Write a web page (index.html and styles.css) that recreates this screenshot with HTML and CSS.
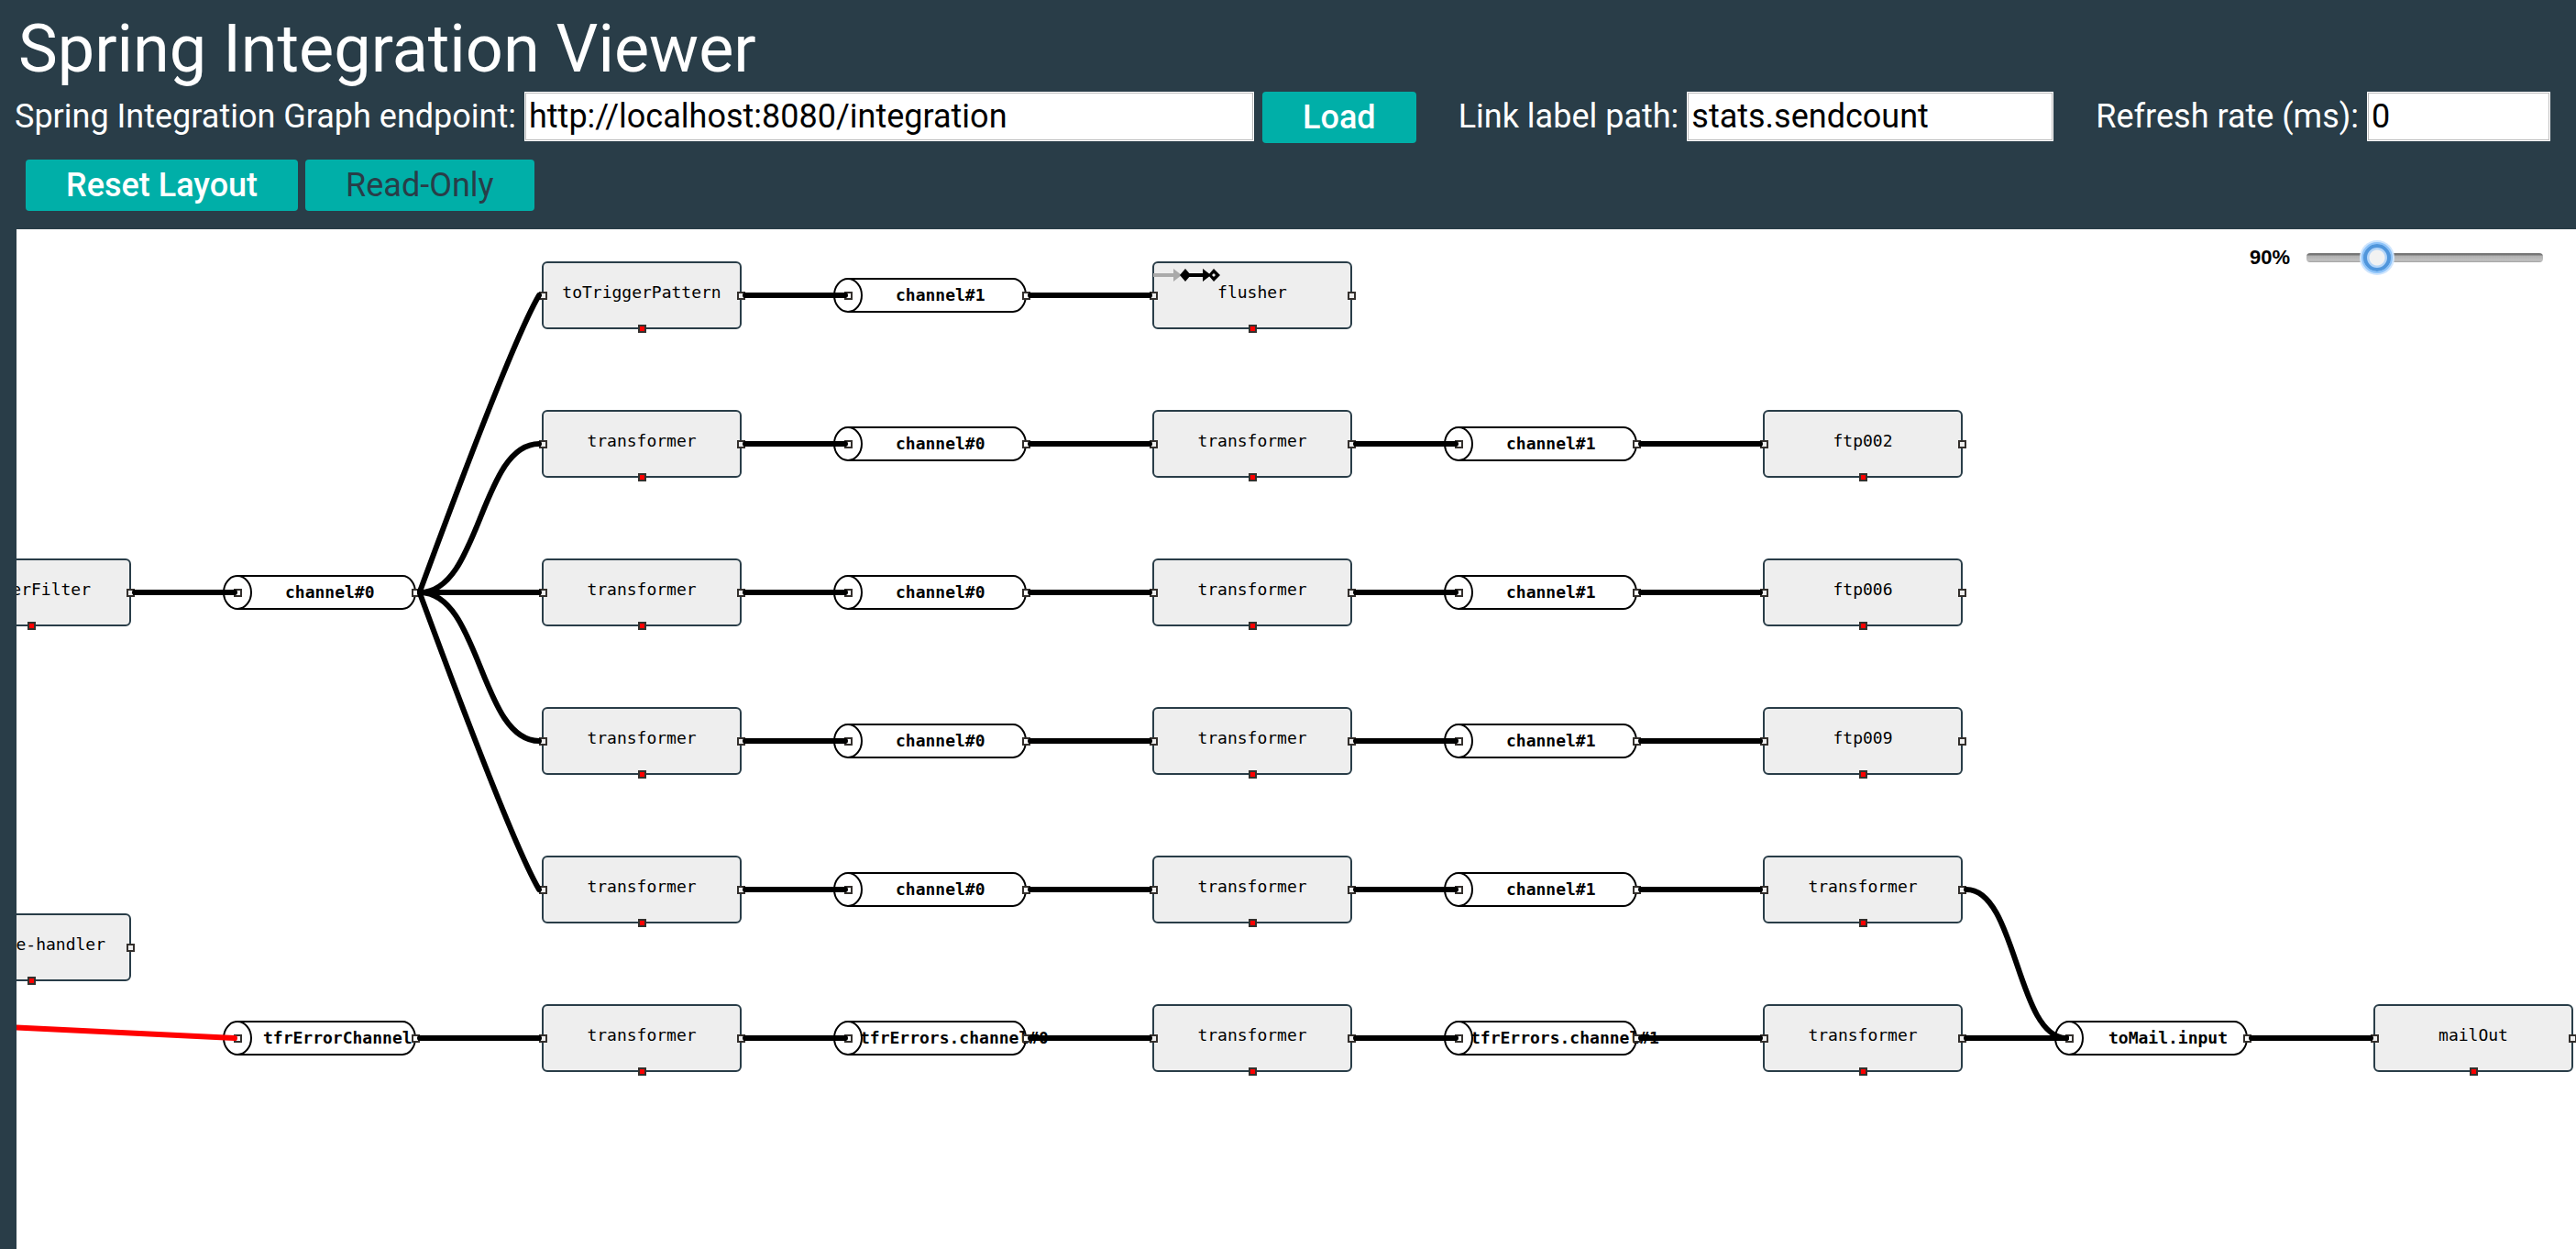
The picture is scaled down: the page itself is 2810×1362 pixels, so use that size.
FILE: index.html
```html
<!DOCTYPE html>
<html lang="en">
<head>
<meta charset="utf-8">
<title>Spring Integration Viewer</title>
<link rel="stylesheet" href="styles.css">
</head>
<body>
<header class="header">
  <h1 class="title">Spring Integration Viewer</h1>
  <form class="controls">
    <div class="field field-wide">
      <label for="endpoint">Spring Integration Graph endpoint:</label>
      <input class="text-input" id="endpoint" type="text" value="http://localhost:8080/integration">
      <button class="button" type="button">Load</button>
    </div>
    <div class="field">
      <label for="link-label">Link label path:</label>
      <input class="text-input input-medium" id="link-label" type="text" value="stats.sendcount">
    </div>
    <div class="field">
      <label for="refresh-rate">Refresh rate (ms):</label>
      <input class="text-input input-short" id="refresh-rate" type="text" value="0">
    </div>
  </form>
  <div class="actions">
    <button class="button" type="button">Reset Layout</button>
    <button class="button button-off" type="button">Read-Only</button>
  </div>
</header>
<main class="canvas">
  <svg class="graph" role="img" aria-label="Integration graph">
    <defs>
      <rect id="port" x="-3" y="-3" width="7" height="7"/>
      <rect id="box" x="-108" y="-36" width="216" height="72" rx="5"/>
      <g id="box-ports">
        <use href="#port" x="-108" class="port"/>
        <use href="#port" x="108" class="port"/>
        <use href="#port" y="36" class="port port-error"/>
      </g>
      <g id="channel">
        <path d="M0 -18H180A14 18 0 0 1 180 18H0"/>
        <ellipse rx="15" ry="18"/>
      </g>
      <g id="channel-ports">
        <use href="#port" class="port port-channel"/>
        <use href="#port" x="194" class="port port-channel"/>
      </g>
    </defs>

    <g class="boxes">
      <use href="#box" x="16" y="396"/>
      <use href="#box" x="16" y="783"/>
      <use href="#box" x="682" y="72"/>
      <use href="#box" x="682" y="234"/>
      <use href="#box" x="682" y="396"/>
      <use href="#box" x="682" y="558"/>
      <use href="#box" x="682" y="720"/>
      <use href="#box" x="682" y="882"/>
      <use href="#box" x="1348" y="72"/>
      <use href="#box" x="1348" y="234"/>
      <use href="#box" x="1348" y="396"/>
      <use href="#box" x="1348" y="558"/>
      <use href="#box" x="1348" y="720"/>
      <use href="#box" x="1348" y="882"/>
      <use href="#box" x="2014" y="234"/>
      <use href="#box" x="2014" y="396"/>
      <use href="#box" x="2014" y="558"/>
      <use href="#box" x="2014" y="720"/>
      <use href="#box" x="2014" y="882"/>
      <use href="#box" x="2680" y="882"/>
    </g>

    <g class="channels">
      <use href="#channel" x="241" y="396"/>
      <use href="#channel" x="241" y="882"/>
      <use href="#channel" x="907" y="72"/>
      <use href="#channel" x="907" y="234"/>
      <use href="#channel" x="907" y="396"/>
      <use href="#channel" x="907" y="558"/>
      <use href="#channel" x="907" y="720"/>
      <use href="#channel" x="907" y="882"/>
      <use href="#channel" x="1573" y="234"/>
      <use href="#channel" x="1573" y="396"/>
      <use href="#channel" x="1573" y="558"/>
      <use href="#channel" x="1573" y="720"/>
      <use href="#channel" x="1573" y="882"/>
      <use href="#channel" x="2239" y="882"/>
    </g>

    <!-- aggregator icon -->
    <g class="icon">
      <path class="icon-muted" d="M1240 48H1262V43L1271 50L1262 57V52H1240Z"/>
      <path d="M1275 43L1281 50L1275 57L1269 50ZM1278 48H1294V43L1303 50L1294 57V52H1278Z"/>
      <path fill-rule="evenodd" d="M1306 43L1313 50L1306 57L1300 50ZM1306 48L1304 50L1306 52L1308 50Z"/>
    </g>

    <g class="box-labels">
      <text class="label-end" x="81" y="399">erFilter</text>
      <text class="label-end" x="97" y="786">e-handler</text>
      <text x="682" y="75">toTriggerPattern</text>
      <text x="682" y="237">transformer</text>
      <text x="682" y="399">transformer</text>
      <text x="682" y="561">transformer</text>
      <text x="682" y="723">transformer</text>
      <text x="682" y="885">transformer</text>
      <text x="1348" y="75">flusher</text>
      <text x="1348" y="237">transformer</text>
      <text x="1348" y="399">transformer</text>
      <text x="1348" y="561">transformer</text>
      <text x="1348" y="723">transformer</text>
      <text x="1348" y="885">transformer</text>
      <text x="2014" y="237">ftp002</text>
      <text x="2014" y="399">ftp006</text>
      <text x="2014" y="561">ftp009</text>
      <text x="2014" y="723">transformer</text>
      <text x="2014" y="885">transformer</text>
      <text x="2680" y="885">mailOut</text>
    </g>

    <g class="channel-labels">
      <text x="293" y="402">channel#0</text>
      <text x="269" y="888">tfrErrorChannel</text>
      <text x="959" y="78">channel#1</text>
      <text x="959" y="240">channel#0</text>
      <text x="959" y="402">channel#0</text>
      <text x="959" y="564">channel#0</text>
      <text x="959" y="726">channel#0</text>
      <text x="920" y="888">tfrErrors.channel#0</text>
      <text x="1625" y="240">channel#1</text>
      <text x="1625" y="402">channel#1</text>
      <text x="1625" y="564">channel#1</text>
      <text x="1625" y="726">channel#1</text>
      <text x="1586" y="888">tfrErrors.channel#1</text>
      <text x="2282" y="888">toMail.input</text>
    </g>

    <g class="ports">
      <use href="#box-ports" x="16" y="396"/>
      <use href="#box-ports" x="16" y="783"/>
      <use href="#box-ports" x="682" y="72"/>
      <use href="#box-ports" x="682" y="234"/>
      <use href="#box-ports" x="682" y="396"/>
      <use href="#box-ports" x="682" y="558"/>
      <use href="#box-ports" x="682" y="720"/>
      <use href="#box-ports" x="682" y="882"/>
      <use href="#box-ports" x="1348" y="72"/>
      <use href="#box-ports" x="1348" y="234"/>
      <use href="#box-ports" x="1348" y="396"/>
      <use href="#box-ports" x="1348" y="558"/>
      <use href="#box-ports" x="1348" y="720"/>
      <use href="#box-ports" x="1348" y="882"/>
      <use href="#box-ports" x="2014" y="234"/>
      <use href="#box-ports" x="2014" y="396"/>
      <use href="#box-ports" x="2014" y="558"/>
      <use href="#box-ports" x="2014" y="720"/>
      <use href="#box-ports" x="2014" y="882"/>
      <use href="#box-ports" x="2680" y="882"/>
      <use href="#channel-ports" x="241" y="396"/>
      <use href="#channel-ports" x="241" y="882"/>
      <use href="#channel-ports" x="907" y="72"/>
      <use href="#channel-ports" x="907" y="234"/>
      <use href="#channel-ports" x="907" y="396"/>
      <use href="#channel-ports" x="907" y="558"/>
      <use href="#channel-ports" x="907" y="720"/>
      <use href="#channel-ports" x="907" y="882"/>
      <use href="#channel-ports" x="1573" y="234"/>
      <use href="#channel-ports" x="1573" y="396"/>
      <use href="#channel-ports" x="1573" y="558"/>
      <use href="#channel-ports" x="1573" y="720"/>
      <use href="#channel-ports" x="1573" y="882"/>
      <use href="#channel-ports" x="2239" y="882"/>
    </g>

    <g class="links">
      <!-- fan-out from the first channel -->
      <path d="M129 396H238"/>
      <path d="M440 395C482 281 544 116 570 72"/>
      <path d="M440 396C506 396 506 234 570 234"/>
      <path d="M440 396H570"/>
      <path d="M440 396C506 396 506 558 570 558"/>
      <path d="M440 397C482 511 544 676 570 720"/>
      <path d="M440 882H570"/>
      <!-- node to channel -->
      <path d="M795 72H904M795 234H904M795 396H904M795 558H904M795 720H904M795 882H904"/>
      <path d="M1461 234H1570M1461 396H1570M1461 558H1570M1461 720H1570M1461 882H1570"/>
      <path d="M2127 882H2236"/>
      <path d="M2127 720C2182 720 2182 882 2236 882"/>
      <!-- channel to node -->
      <path d="M1106 72H1236M1106 234H1236M1106 396H1236M1106 558H1236M1106 720H1236M1106 882H1236"/>
      <path d="M1772 234H1902M1772 396H1902M1772 558H1902M1772 720H1902M1772 882H1902"/>
      <path d="M2438 882H2568"/>
      <path class="link-error" d="M-10 870L238 882"/>
    </g>
  </svg>
  <div class="zoom">
    <label for="zoom">90%</label>
    <input class="zoom-slider" id="zoom" type="range" min="0" max="100" value="27">
  </div>
</main>
</body>
</html>
```
FILE: styles.css
```css
* {
  box-sizing: border-box;
}

html,
body {
  height: 100%;
}

body {
  display: flex;
  flex-direction: column;
  margin: 0;
  overflow: hidden;
  background: #293d48;
  color: #fff;
  font: 36px/42px Roboto, sans-serif;
}

.header {
  padding: 12px 28px 20px 16px;
}

.title {
  margin: 0 0 4px;
  padding-left: 4px;
  font-size: 72px;
  line-height: 84px;
  font-weight: 400;
}

.controls {
  display: flex;
  align-items: flex-start;
  gap: 46px;
}

.field {
  display: flex;
  align-items: flex-start;
  gap: 9px;
  white-space: nowrap;
}

.field label {
  padding-top: 6px;
}

.field-wide,
.field-wide .text-input {
  flex: 1;
  min-width: 0;
}

.text-input {
  height: 54px;
  padding: 0 4px;
  border: 1px solid #fff;
  box-shadow: inset 0 0 0 1px #bbb;
  background: #fff;
  color: #000;
  font: inherit;
}

.input-medium {
  width: 400px;
}

.input-short {
  width: 200px;
}

.button {
  height: 56px;
  padding: 0 44px;
  border: 0;
  border-radius: 4px;
  background: #00afa8;
  color: #fff;
  font: inherit;
  font-weight: 500;
}

.button-off {
  color: #293d48;
  font-weight: 400;
}

.actions {
  display: flex;
  gap: 8px;
  padding: 18px 0 0 12px;
}

.canvas {
  position: relative;
  flex: 1;
  min-height: 0;
  margin-left: 18px;
  background: #fff;
  color: #000;
}

.graph {
  display: block;
  width: 100%;
  height: 100%;
}

.boxes {
  fill: #eee;
  stroke: #293d48;
  stroke-width: 2px;
}

.channels {
  fill: #fff;
  stroke: #000;
  stroke-width: 2px;
}

.box-labels,
.channel-labels {
  font: 18px "DejaVu Sans Mono", monospace;
}

.box-labels {
  text-anchor: middle;
}

.label-end {
  text-anchor: end;
}

.channel-labels {
  font-weight: 700;
}

.port {
  fill: #eee;
  stroke: #34302d;
  stroke-width: 2px;
}

.port-channel {
  fill: #fff;
}

.port-error {
  fill: #f00;
}

.links {
  fill: none;
  stroke: #000;
  stroke-width: 6px;
  stroke-linecap: round;
}

.link-error {
  stroke: #f00;
}

.icon-muted {
  fill: #aaa;
}

.zoom {
  position: absolute;
  top: 12px;
  right: 36px;
  display: flex;
  align-items: center;
  gap: 18px;
  font: bold 22px/38px "Liberation Sans", Arial, sans-serif;
}

.zoom-slider {
  appearance: none;
  width: 258px;
  height: 38px;
  margin: 0;
  background: none;
}

.zoom-slider::-webkit-slider-runnable-track {
  height: 10px;
  border-radius: 4px;
  background: linear-gradient(#777 0 2px, #b0b0b0 3px, #c2c2c2 8px, #a0a0a0);
}

.zoom-slider::-webkit-slider-thumb {
  appearance: none;
  width: 30px;
  height: 30px;
  margin-top: -10px;
  border: 4px solid #5096dc;
  border-radius: 50%;
  background: radial-gradient(#f2f2f2 0 8px, #b4d5f8 9px);
  box-shadow: 0 0 0 2px #8cc3fa, 0 0 0 4px #cfe5fd;
}
```
